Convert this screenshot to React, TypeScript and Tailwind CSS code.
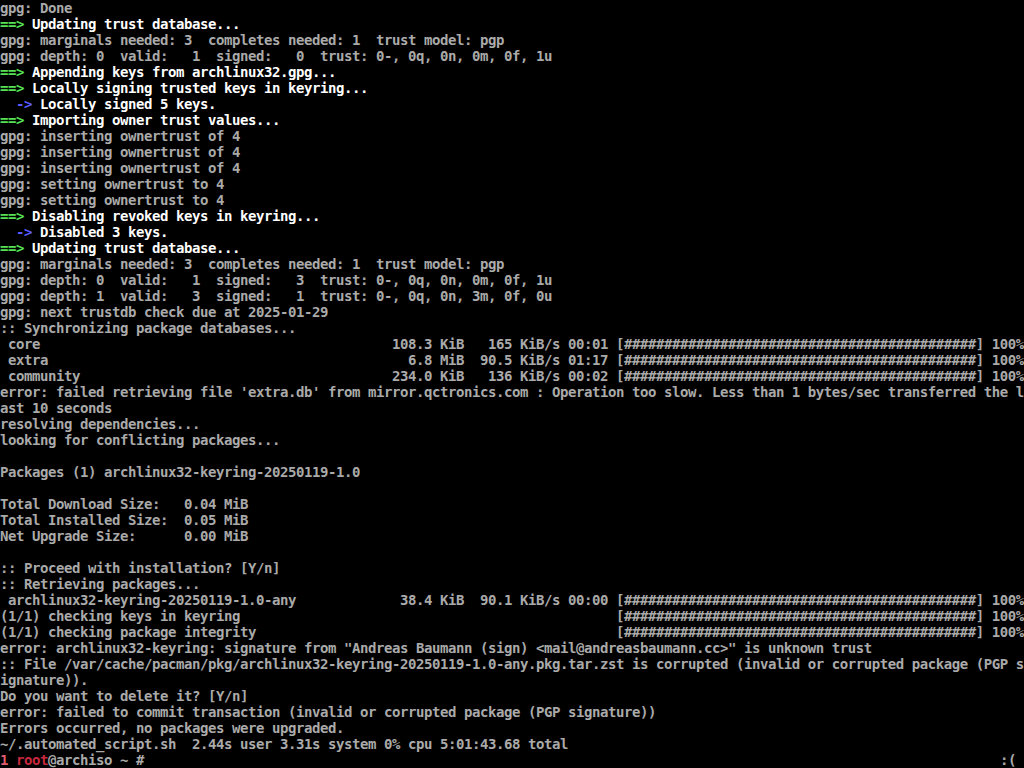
import React from "react";

type Seg = [string, string?];

const G = "text-[#aaaaaa]";
const W = "text-[#ffffff]";
const GR = "text-[#55e055]";
const BL = "text-[#5a5aff]";

const BAR = "[" + "############################################" + "] 100%";

function pad(s: string, n: number) {
  return s + " ".repeat(Math.max(0, n - s.length));
}

const rows: Seg[][] = [
  [["gpg: Done"]],
  [["==> ", GR], ["Updating trust database...", W]],
  [["gpg: marginals needed: 3  completes needed: 1  trust model: pgp"]],
  [["gpg: depth: 0  valid:   1  signed:   0  trust: 0-, 0q, 0n, 0m, 0f, 1u"]],
  [["==> ", GR], ["Appending keys from archlinux32.gpg...", W]],
  [["==> ", GR], ["Locally signing trusted keys in keyring...", W]],
  [["  -> ", BL], ["Locally signed 5 keys.", W]],
  [["==> ", GR], ["Importing owner trust values...", W]],
  [["gpg: inserting ownertrust of 4"]],
  [["gpg: inserting ownertrust of 4"]],
  [["gpg: inserting ownertrust of 4"]],
  [["gpg: setting ownertrust to 4"]],
  [["gpg: setting ownertrust to 4"]],
  [["==> ", GR], ["Disabling revoked keys in keyring...", W]],
  [["  -> ", BL], ["Disabled 3 keys.", W]],
  [["==> ", GR], ["Updating trust database...", W]],
  [["gpg: marginals needed: 3  completes needed: 1  trust model: pgp"]],
  [["gpg: depth: 0  valid:   1  signed:   3  trust: 0-, 0q, 0n, 0m, 0f, 1u"]],
  [["gpg: depth: 1  valid:   3  signed:   1  trust: 0-, 0q, 0n, 3m, 0f, 0u"]],
  [["gpg: next trustdb check due at 2025-01-29"]],
  [[":: Synchronizing package databases..."]],
  [[pad(" core", 49) + "108.3 KiB   165 KiB/s 00:01 " + BAR]],
  [[pad(" extra", 49) + "  6.8 MiB  90.5 KiB/s 01:17 " + BAR]],
  [[pad(" community", 49) + "234.0 KiB   136 KiB/s 00:02 " + BAR]],
  [["error: failed retrieving file 'extra.db' from mirror.qctronics.com : Operation too slow. Less than 1 bytes/sec transferred the l"]],
  [["ast 10 seconds"]],
  [["resolving dependencies..."]],
  [["looking for conflicting packages..."]],
  [[""]],
  [["Packages (1) archlinux32-keyring-20250119-1.0"]],
  [[""]],
  [["Total Download Size:   0.04 MiB"]],
  [["Total Installed Size:  0.05 MiB"]],
  [["Net Upgrade Size:      0.00 MiB"]],
  [[""]],
  [[":: Proceed with installation? [Y/n]"]],
  [[":: Retrieving packages..."]],
  [[pad(" archlinux32-keyring-20250119-1.0-any", 49) + " 38.4 KiB  90.1 KiB/s 00:00 " + BAR]],
  [[pad("(1/1) checking keys in keyring", 77) + BAR]],
  [[pad("(1/1) checking package integrity", 77) + BAR]],
  [["error: archlinux32-keyring: signature from \"Andreas Baumann (sign) <mail@andreasbaumann.cc>\" is unknown trust"]],
  [[":: File /var/cache/pacman/pkg/archlinux32-keyring-20250119-1.0-any.pkg.tar.zst is corrupted (invalid or corrupted package (PGP s"]],
  [["ignature))."]],
  [["Do you want to delete it? [Y/n]"]],
  [["error: failed to commit transaction (invalid or corrupted package (PGP signature))"]],
  [["Errors occurred, no packages were upgraded."]],
  [["~/.automated_script.sh  2.44s user 3.31s system 0% cpu 5:01:43.68 total"]],
];

export default function App() {
  return (
    <div
      className="w-[1024px] h-[768px] bg-black overflow-hidden text-[14px] leading-[16px] tracking-[-0.43px] font-bold text-[#aaaaaa]"
      style={{ fontFamily: '"DejaVu Sans Mono", "Liberation Mono", monospace' }}
    >
      {rows.map((row, i) => (
        <div key={i} className="h-[16px] whitespace-pre">
          {row.map(([t, c], j) => (
            <span key={j} className={c ?? G}>
              {t}
            </span>
          ))}
        </div>
      ))}
      <div className="h-[16px] whitespace-pre flex justify-between">
        <span>
          <span className="text-[#e05a6e]">1 </span>
          <span className="text-[#c8283c]">root</span>
          <span className={G}>@archiso ~ #</span>
        </span>
        <span className={`${G} mr-[8px]`}>:(</span>
      </div>
    </div>
  );
}
